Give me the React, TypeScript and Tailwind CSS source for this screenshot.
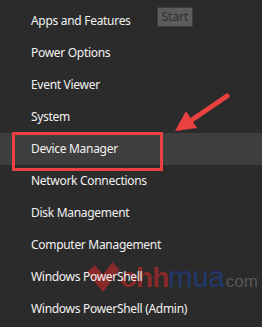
import React from "react";

const items = [
  "Apps and Features",
  "Power Options",
  "Event Viewer",
  "System",
  "Device Manager",
  "Network Connections",
  "Disk Management",
  "Computer Management",
  "Windows PowerShell",
  "Windows PowerShell (Admin)",
];

export default function App() {
  return (
    <div
      className="relative w-[262px] h-[327px] overflow-hidden bg-[#2b2b2b] text-[#f2f2f2]"
      style={{ fontFamily: '"Noto Sans", "Open Sans", sans-serif' }}
    >
      {/* Watermark (behind menu text) */}
      <div className="absolute left-[86px] top-[261px] flex items-start opacity-70 pointer-events-none">
        <svg width="34" height="31" viewBox="0 0 32 30" className="mt-[1px]">
          <path d="M0 10 L8 3 L16 12 L25 0 L32 8 L16 29 Z" fill="#b02a2a" />
        </svg>
        <div className="flex items-baseline mt-[2px]" style={{ fontFamily: '"Liberation Sans", sans-serif' }}>
          <span className="text-[28px] leading-none font-bold text-[#b02a2a] tracking-[-1px]">ohh</span>
          <span className="text-[29px] leading-none text-[#1d3f8a]">mua</span>
          <span className="text-[17px] leading-none text-[#6a6a6a] ml-[1px]">com</span>
        </div>
      </div>

      <div className="relative flex flex-col pt-[5px]">
        {items.map((t) => (
          <div
            key={t}
            className={`h-[32px] flex items-center pl-[31px] text-[12px] tracking-[-0.3px] ${
              t === "Device Manager" ? "bg-[#3e3e3e]" : ""
            }`}
          >
            {t}
          </div>
        ))}
      </div>

      {/* Start tooltip */}
      <div className="absolute left-[157px] top-[7px] w-[36px] h-[20px] bg-[#5c5c5c] border border-[#3c3c3c] text-[#2f2f2f] text-[12px] flex items-center justify-center leading-none">
        Start
      </div>

      {/* Red highlight box */}
      <div className="absolute left-[12px] top-[132px] w-[151px] h-[39px] border-[3px] border-[#e8413f]" />

      {/* Arrow */}
      <svg className="absolute left-0 top-0" width="262" height="327">
        <line x1="227" y1="96" x2="180" y2="128" stroke="#e8413f" strokeWidth="5" strokeLinecap="round" />
        <polygon points="175,131 186,111 197,128" fill="#e8413f" />
      </svg>
    </div>
  );
}
